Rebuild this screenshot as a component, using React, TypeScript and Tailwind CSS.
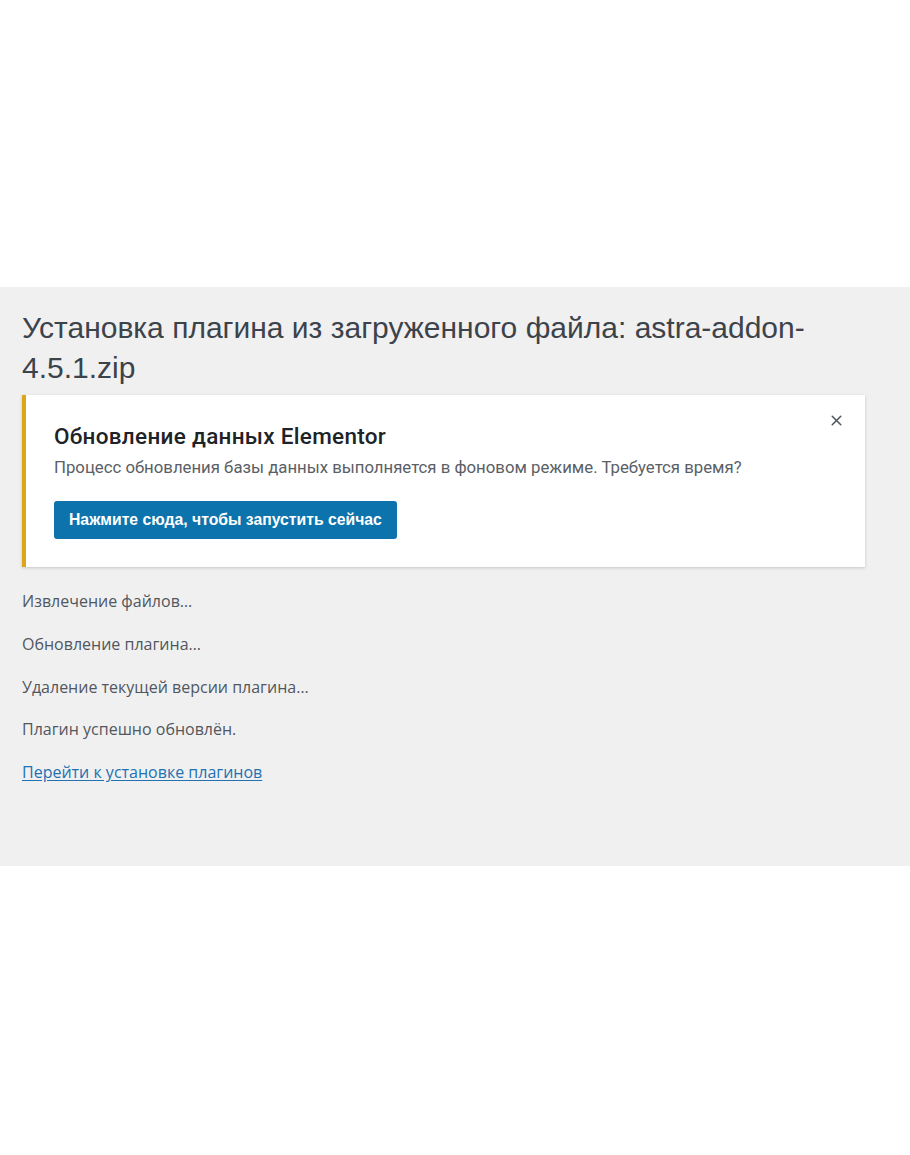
import { X } from "lucide-react";

const steps = [
  "Извлечение файлов…",
  "Обновление плагина…",
  "Удаление текущей версии плагина…",
  "Плагин успешно обновлён.",
];

export default function App() {
  return (
    <div className="min-h-[1155px] w-[910px] bg-white">
      <div className="h-[287px]" />
      <div className="h-[579px] bg-[#f0f0f1] pl-[22px] pr-[45px] pt-[21px]">
        <h1 className="font-['Liberation_Sans',sans-serif] text-[30px] leading-[40px] font-normal text-[#3c434a]">
          Установка плагина из загруженного файла: astra-addon-4.5.1.zip
        </h1>
        <div className="relative mt-[7px] h-[172px] border-l-4 border-[#dba617] bg-white pl-[28px] pt-[27px] shadow-[0_1px_3px_rgba(0,0,0,0.18)]">
          <button className="absolute right-[20px] top-[17px] text-[#50575e]">
            <X size={17} strokeWidth={2.2} />
          </button>
          <h2 className="font-['Roboto',sans-serif] text-[22.5px] leading-[28px] font-medium tracking-[0.3px] text-[#1d2327]">
            Обновление данных Elementor
          </h2>
          <p className="mt-[7px] font-['Roboto',sans-serif] text-[16.75px] leading-[20px] text-[#5a6066]">
            Процесс обновления базы данных выполняется в фоновом режиме. Требуется время?
          </p>
          <button className="mt-[24px] h-[38px] rounded-[3px] bg-[#0c73ad] px-[15px] font-['Liberation_Sans',sans-serif] text-[15.75px] font-bold text-white">
            Нажмите сюда, чтобы запустить сейчас
          </button>
        </div>
        <div className="mt-[24px] flex flex-col gap-[22.75px] font-['Open_Sans',sans-serif] text-[16px] leading-[20px] text-[#50575e]">
          {steps.map((s) => (
            <p key={s}>{s}</p>
          ))}
          <a href="#" className="text-[#2271b1] underline underline-offset-2">
            Перейти к установке плагинов
          </a>
        </div>
      </div>
    </div>
  );
}
